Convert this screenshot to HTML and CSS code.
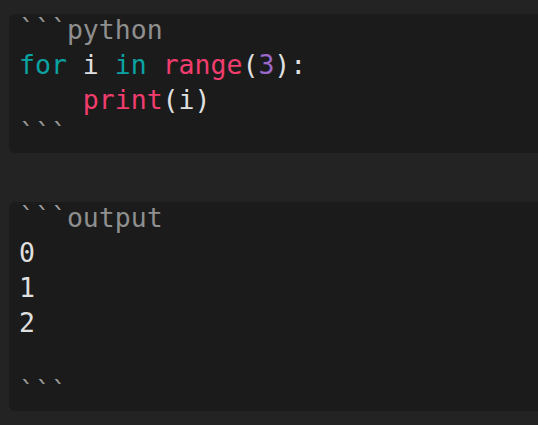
FILE: index.html
```html
<!DOCTYPE html>
<html>
<head>
<meta charset="utf-8">
<link rel="stylesheet" href="styles.css">
</head>
<body>
<div class="page">
  <div class="block">
    <div class="line"><span class="tick">```</span><span class="lang">python</span></div>
    <div class="line"><span class="kw">for</span> i <span class="kw">in</span> <span class="fn">range</span>(<span class="num">3</span>):</div>
    <div class="line">    <span class="fn">print</span>(i)</div>
    <div class="line"><span class="tick">```</span></div>
  </div>
  <div class="block">
    <div class="line"><span class="tick">```</span><span class="lang">output</span></div>
    <div class="line">0</div>
    <div class="line">1</div>
    <div class="line">2</div>
    <div class="line"> </div>
    <div class="line"><span class="tick">```</span></div>
  </div>
</div>
</body>
</html>
```
FILE: styles.css
```css
html, body {
  margin: 0;
  padding: 0;
  background: #232323;
}
.page {
  display: flex;
  flex-direction: column;
  gap: 49px;
  padding: 14px 0 0 9px;
}
.block {
  background: #1b1b1b;
  border-radius: 6px 0 0 6px;
  padding: 0 0 0 10px;
  font-family: "DejaVu Sans Mono", monospace;
  font-size: 26.5px;
  color: #e0e0e0;
}
.line {
  height: 34.8px;
  line-height: 31px;
  white-space: pre;
}
.tick { color: #9a9a9a; }
.lang { color: #8f8f8f; }
.kw { color: #0aa3a3; }
.fn { color: #f13d6e; }
.num { color: #9b67c9; }
```
